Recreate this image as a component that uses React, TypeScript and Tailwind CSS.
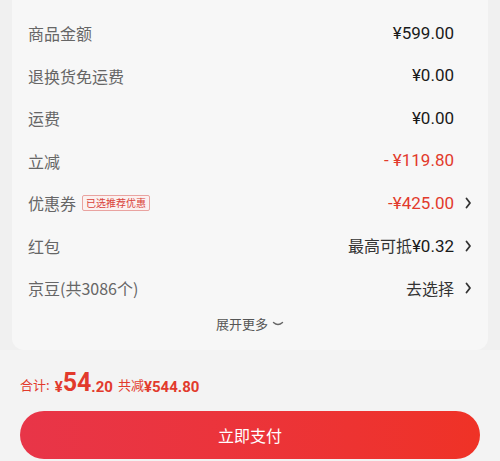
import React from "react";

const cjk = { fontFamily: '"Noto Sans CJK SC", "Noto Sans", sans-serif' };
const num = { fontFamily: 'Roboto, "Noto Sans CJK SC", sans-serif' };

function Chevron() {
  return (
    <svg width="8" height="12" viewBox="0 0 8 12" fill="none">
      <path d="M2.5 1.5 L6 6 L2.5 10.5" stroke="#333" strokeWidth="1.8" strokeLinecap="round" strokeLinejoin="round" />
    </svg>
  );
}

type Row = { label: React.ReactNode; value: React.ReactNode; chevron?: boolean };

export default function App() {
  const rows: Row[] = [
    { label: "商品金额", value: <span style={num} className="text-[17px] text-[#1a1a1a]">¥599.00</span> },
    { label: "退换货免运费", value: <span style={num} className="text-[17px] text-[#1a1a1a]">¥0.00</span> },
    { label: "运费", value: <span style={num} className="text-[17px] text-[#1a1a1a]">¥0.00</span> },
    { label: "立减", value: <span style={num} className="text-[17px] text-[#e23a2c]">- ¥119.80</span> },
    {
      label: (
        <span className="flex items-center gap-[6px]">
          优惠券
          <span className="border border-[#e9a3a0] bg-[#fbf1f0] text-[#d9423a] text-[10px] leading-[14px] px-[3px] rounded-[2px]">已选推荐优惠</span>
        </span>
      ),
      value: <span style={num} className="text-[17px] text-[#e23a2c]">-¥425.00</span>,
      chevron: true,
    },
    {
      label: "红包",
      value: (
        <span className="text-[17px] text-[#1a1a1a] flex items-baseline">
          <span style={cjk} className="text-[16px] text-[#333]">最高可抵</span>
          <span style={num}>¥0.32</span>
        </span>
      ),
      chevron: true,
    },
    { label: "京豆(共3086个)", value: <span style={cjk} className="text-[16px] text-[#333]">去选择</span>, chevron: true },
  ];

  return (
    <div className="w-[500px] h-[461px] bg-[#f0f0f0] overflow-hidden flex flex-col" style={cjk}>
      <div className="mx-[12px] bg-[#f7f7f7] rounded-b-[12px] pt-[12px] pb-[12px]">
        {rows.map((r, i) => (
          <div key={i} className="h-[42.5px] flex items-center pl-[16px] pr-[16px]">
            <div className="flex-1 text-[16px] text-[#666]">{r.label}</div>
            <div className="flex items-center">{r.value}</div>
            <div className="w-[18px] flex justify-end">{r.chevron ? <Chevron /> : null}</div>
          </div>
        ))}
        <div className="h-[28px] flex items-center justify-center gap-[4px] text-[13px] text-[#555]">
          展开更多
          <svg width="12" height="8" viewBox="0 0 12 8" fill="none">
            <path d="M1.5 2.5 Q6 6.5 10.5 2.5" stroke="#666" strokeWidth="1.4" strokeLinecap="round" />
          </svg>
        </div>
      </div>
      <div className="flex-1 bg-[#f3f3f3] px-[20px] flex flex-col">
        <div className="h-[58px] flex items-end pb-[13px] text-[#e23a2c]">
          <span className="text-[13px] mr-[5px]">合计:</span>
          <span style={num} className="font-bold text-[15px] leading-none">¥</span>
          <span style={num} className="font-bold text-[25px] leading-none">54</span>
          <span style={num} className="font-bold text-[15px] leading-none mr-[5px]">.20</span>
          <span className="text-[13px]">共减</span>
          <span style={num} className="font-bold text-[15px] leading-none">¥544.80</span>
        </div>
        <div className="h-[48px] mt-[3px] rounded-full bg-gradient-to-r from-[#e83548] to-[#ef3226] flex items-center justify-center text-white text-[16px]">
          立即支付
        </div>
      </div>
    </div>
  );
}
